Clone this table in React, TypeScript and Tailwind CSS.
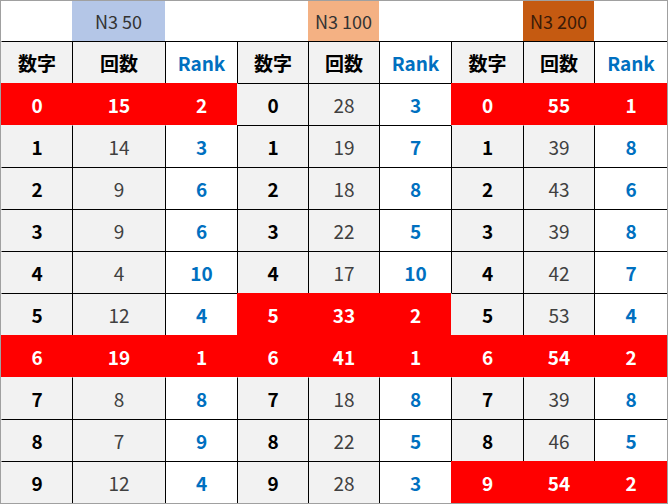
import React from "react";

const counts = [
  [15, 14, 9, 9, 4, 12, 19, 8, 7, 12],
  [28, 19, 18, 22, 17, 33, 41, 18, 22, 28],
  [55, 39, 43, 39, 42, 53, 54, 39, 46, 54],
];
const ranks = [
  [2, 3, 6, 6, 10, 4, 1, 8, 9, 4],
  [3, 7, 8, 5, 10, 2, 1, 8, 5, 3],
  [1, 8, 6, 8, 7, 4, 2, 8, 5, 2],
];
const reds = [
  [0, 6],
  [5, 6],
  [0, 6, 9],
];

// r: -1 header, 0..9 data
function isRed(r: number, c: number) {
  if (r < 0) return false;
  const g = Math.floor(c / 3);
  return reds[g].includes(r);
}

const font = { fontFamily: '"Noto Sans CJK JP", "Noto Sans", sans-serif' };

export default function App() {
  const cells: React.ReactNode[] = [];
  for (let r = -1; r < 10; r++) {
    for (let c = 0; c < 9; c++) {
      const g = Math.floor(c / 3);
      const k = c % 3;
      const red = isRed(r, c);
      const top = !red && !isRed(r - 1, c);
      const left = c > 0 && !red && !isRed(r, c - 1);
      let text: string;
      let style: string;
      if (r < 0) {
        text = k === 0 ? "数字" : k === 1 ? "回数" : "Rank";
        style = k === 2 ? "bg-white text-[#0070c0] font-bold" : "bg-[#f2f2f2] text-black font-bold";
      } else {
        text = k === 0 ? String(r) : k === 1 ? String(counts[g][r]) : String(ranks[g][r]);
        if (red) style = "bg-[#ff0000] text-white font-bold";
        else if (k === 0) style = "bg-[#f2f2f2] text-black font-bold";
        else if (k === 1) style = "bg-[#f2f2f2] text-[#404040] font-normal";
        else style = "bg-white text-[#0070c0] font-bold";
      }
      cells.push(
        <div
          key={`${r}-${c}`}
          className={`flex items-center justify-center text-[19px] leading-none ${style} ${
            top ? "border-t border-t-black" : "border-t border-t-transparent"
          } ${left ? "border-l border-l-black" : "border-l border-l-transparent"}`}
        >
          {text}
        </div>
      );
    }
  }
  return (
    <div className="w-[668px] h-[504px] bg-white border border-[#a0a0a0] overflow-hidden" style={font}>
      <div className="grid grid-cols-[71px_93px_72px_71px_71px_72px_72px_71px_73px] grid-rows-[40px_repeat(11,42px)]">
        <div />
        <div className="bg-[#b4c6e7] text-[#333] flex items-center justify-center text-[18px]">N3 50</div>
        <div />
        <div />
        <div className="bg-[#f4b183] text-[#333] flex items-center justify-center text-[18px]">N3 100</div>
        <div />
        <div />
        <div className="bg-[#c55a11] text-[#3a1a08] flex items-center justify-center text-[18px]">N3 200</div>
        <div />
        {cells}
      </div>
    </div>
  );
}
